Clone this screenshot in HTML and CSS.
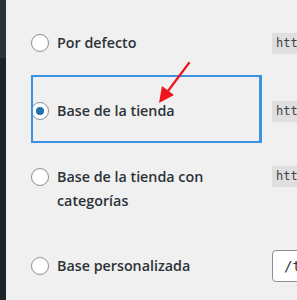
FILE: index.html
```html
<!DOCTYPE html>
<html lang="es">
<head>
<meta charset="utf-8">
<link rel="stylesheet" href="styles.css">
</head>
<body>
<div class="page">
  <div class="sidebar"><div class="sidebar-top"></div><div class="sidebar-bottom"></div></div>
  <main class="main">
    <div class="row row-1">
      <label class="choice"><span class="radio"></span><span class="text">Por defecto</span></label>
      <code class="url">https://example.com/producto/</code>
    </div>
    <div class="row row-2">
      <label class="choice"><span class="radio checked"></span><span class="text">Base de la tienda</span></label>
      <code class="url">https://example.com/tienda/</code>
    </div>
    <div class="row row-3">
      <label class="choice"><span class="radio"></span><span class="text">Base de la tienda con categorías</span></label>
      <code class="url">https://example.com/tienda/</code>
    </div>
    <div class="row row-4">
      <label class="choice"><span class="radio"></span><span class="text">Base personalizada</span></label>
      <span class="input">/tienda/</span>
    </div>
  </main>
  <div class="highlight"></div>
  <svg class="arrow" width="297" height="300" viewBox="0 0 297 300">
    <line x1="189" y1="63" x2="168" y2="91" stroke="#f0141e" stroke-width="2.2" stroke-linecap="round"/>
    <polygon points="159,103 162,86 174,95" fill="#f0141e"/>
  </svg>
</div>
</body>
</html>
```

FILE: styles.css
```css
html, body {
  margin: 0;
  padding: 0;
  background: #f0f0f1;
  overflow: hidden;
}
.page {
  position: relative;
  display: flex;
  width: 297px;
  height: 300px;
  overflow: hidden;
  font-family: "Open Sans", "Noto Sans", sans-serif;
  color: #2c3338;
}
.sidebar {
  flex: 0 0 6px;
  display: flex;
  flex-direction: column;
}
.sidebar-top { height: 58px; background: #2c3338; }
.sidebar-bottom { flex: 1; background: #1d2327; }
.main {
  flex: 1;
  padding-left: 25px;
  display: flex;
  flex-direction: column;
}
.row {
  display: flex;
  align-items: center;
  height: 42px;
}
.row-1 { margin-top: 22px; }
.row-2 { margin-top: 26px; }
.row-3 { margin-top: 33px; height: 48px; }
.row-4 { margin-top: 32px; }
.choice {
  display: flex;
  align-items: flex-start;
  width: 241px;
  flex: 0 0 241px;
  font-size: 14.3px;
  line-height: 24px;
  font-weight: 600;
  color: #2c3338;
}
.text { width: 160px; }
.radio {
  box-sizing: border-box;
  flex: 0 0 18px;
  width: 18px;
  height: 18px;
  margin-top: 3px;
  margin-right: 8px;
  border: 1px solid #8c8f94;
  border-radius: 50%;
  background: #fff;
  display: flex;
  align-items: center;
  justify-content: center;
}
.radio.checked::after {
  content: "";
  width: 8px;
  height: 8px;
  border-radius: 50%;
  background: #2271b1;
}
.url {
  white-space: nowrap;
  font-family: "DejaVu Sans Mono", monospace;
  font-size: 12px;
  line-height: 21px;
  padding: 0 4px;
  background: rgba(0, 0, 0, 0.07);
  color: #3c434a;
}
.row-3 .url { align-self: flex-start; margin-top: 1px; }
.input {
  box-sizing: border-box;
  height: 32px;
  padding: 0 11px;
  border: 1px solid #8c8f94;
  border-radius: 4px;
  background: #fff;
  white-space: nowrap;
  font-family: "DejaVu Sans Mono", monospace;
  font-size: 14px;
  line-height: 30px;
  color: #2c3338;
}
.highlight {
  position: absolute;
  left: 31px;
  top: 75px;
  width: 226px;
  height: 64px;
  border: 2px solid #3a92e2;
  border-right-width: 3px;
}
.arrow {
  position: absolute;
  left: 0;
  top: 0;
  pointer-events: none;
}
```
